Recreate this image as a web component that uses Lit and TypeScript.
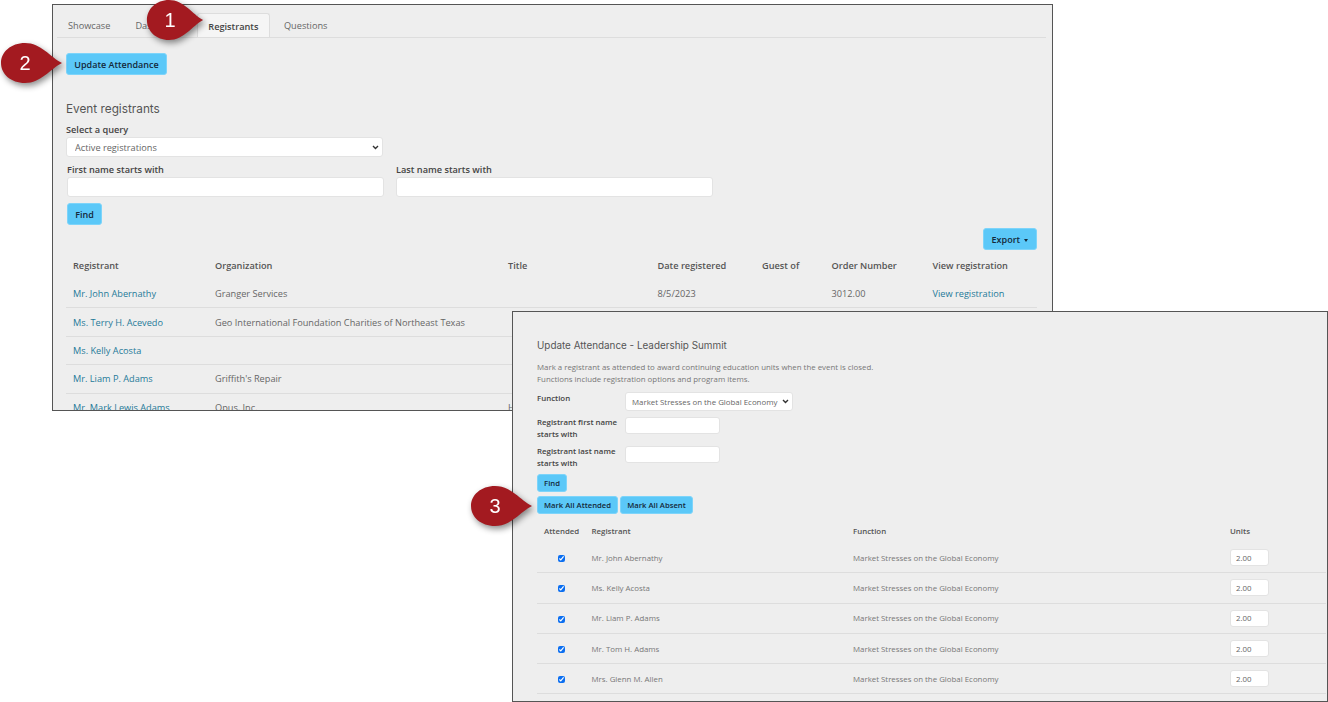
import { LitElement, html, css } from 'lit';
import { customElement } from 'lit/decorators.js';

const registrants = [
  { name: 'Mr. John Abernathy', org: 'Granger Services', title: '', date: '8/5/2023', order: '3012.00', view: 'View registration' },
  { name: 'Ms. Terry H. Acevedo', org: 'Geo International Foundation Charities of Northeast Texas', title: '', date: '', order: '', view: '' },
  { name: 'Ms. Kelly Acosta', org: '', title: '', date: '', order: '', view: '' },
  { name: 'Mr. Liam P. Adams', org: "Griffith's Repair", title: '', date: '', order: '', view: '' },
  { name: 'Mr. Mark Lewis Adams', org: 'Opus, Inc.', title: 'Head', date: '', order: '', view: '' },
];

const attendees = ['Mr. John Abernathy', 'Ms. Kelly Acosta', 'Mr. Liam P. Adams', 'Mr. Tom H. Adams', 'Mrs. Glenn M. Allen'];

@customElement('app-root')
export class AppRoot extends LitElement {
  static styles = css`
    :host {
      display: block;
      position: relative;
      width: 1328px;
      height: 702px;
      overflow: hidden;
      background: #fff;
      font-family: 'Open Sans', sans-serif;
      font-size: 9.2px;
      color: #666;
    }

    .window {
      position: absolute;
      box-sizing: border-box;
      background: #eee;
      border: 1px solid #555;
      overflow: hidden;
    }

    .registrants { left: 52px; top: 4px; width: 1001px; height: 407px; padding: 8px 6px 0 13px; }
    .attendance { left: 512px; top: 311px; width: 816px; height: 391px; padding: 25px 0 0 24px; }

    .tabs {
      display: flex;
      gap: 3px;
      margin-left: -9px;
      height: 24px;
      border-bottom: 1px solid #ddd;
    }
    .tab { padding: 0 11px; line-height: 25px; color: #666; }
    .tab.active {
      color: #444;
      font-weight: 600;
      background: #f5f5f5;
      border: 1px solid #ddd;
      border-bottom: none;
      border-radius: 3px 3px 0 0;
      padding: 0 10.5px;
    }

    button {
      display: block;
      box-sizing: border-box;
      font-family: 'Open Sans', sans-serif;
      font-size: 9px;
      font-weight: 600;
      color: #14293a;
      background: #5bc8f8;
      border: 1px solid #7dd4fa;
      border-radius: 3px;
      padding: 0;
    }
    .update { width: 101px; height: 22px; margin-top: 15px; }
    .find { width: 35px; height: 22px; margin: 6px 0 0 1px; }
    .export { width: 54px; height: 22px; margin: 3px 9px 0 auto; }
    .caret {
      display: inline-block;
      margin-left: 2px;
      vertical-align: middle;
      border-top: 3px solid #14293a;
      border-left: 2.5px solid transparent;
      border-right: 2.5px solid transparent;
    }

    h2 {
      margin: 26px 0 0;
      font-family: Inter, sans-serif;
      font-size: 11.8px;
      line-height: 16px;
      font-weight: 400;
      color: #555;
    }

    label { font-weight: 600; color: #444; line-height: 13px; display: block; }
    .query { margin-top: 6px; }
    .query label { line-height: 14px; }

    select, input[type='text'] {
      display: block;
      box-sizing: border-box;
      font-family: 'Open Sans', sans-serif;
      font-size: 9.2px;
      color: #666;
      background: #fff;
      border: 1px solid #e3e3e3;
      border-radius: 3px;
      margin: 0;
    }
    select {
      appearance: none;
      background-image: url("data:image/svg+xml,%3Csvg xmlns='http://www.w3.org/2000/svg' width='7' height='5'%3E%3Cpath d='M1 1l2.5 2.5L6 1' fill='none' stroke='%23333' stroke-width='1.4'/%3E%3C/svg%3E");
      background-repeat: no-repeat;
      background-position: right 3px center;
    }
    .query select { width: 317px; height: 20px; padding-left: 8px; }

    .names { display: flex; gap: 12px; margin: 6px 0 0 1px; }
    .names input { width: 317px; height: 20px; margin-top: 1px; }

    table { border-collapse: collapse; table-layout: fixed; }
    th { text-align: left; font-weight: 600; color: #555; padding: 0 0 0 7px; }
    td { padding: 0 0 0 7px; white-space: nowrap; overflow: hidden; }
    a { color: #1f7a99; text-decoration: none; }

    .reg-table { width: 971px; margin-top: 1px; }
    .reg-table th { height: 29px; }
    .reg-table td { height: 27.4px; border-bottom: 1px solid #ddd; line-height: 13px; }

    .attendance h3 {
      margin: 0;
      font-family: Inter, sans-serif;
      font-size: 9.9px;
      line-height: 16px;
      font-weight: 400;
      color: #555;
    }
    .attendance p { margin: 8px 0 0; font-size: 7.86px; line-height: 12px; color: #777; }

    .form {
      display: grid;
      grid-template-columns: 88px 95px;
      align-items: start;
      row-gap: 5px;
      margin-top: 7px;
      font-size: 7.86px;
    }
    .form label { line-height: 12px; }
    .form .single { line-height: 13px; }
    .form select, .form input { font-size: 7.86px; }
    .form select { width: 168px; height: 19px; padding-left: 6px; background-position: right 3px center; }
    .form input { width: 95px; height: 17px; margin-top: 1px; }

    .attendance button { font-size: 7.7px; height: 18px; }
    .attendance .a-find { width: 30px; margin-top: 5px; }
    .marks { display: flex; gap: 2px; margin-top: 4px; }
    .marks .all { width: 81px; }
    .marks .absent { width: 73px; }

    .att-table { width: 789px; font-size: 7.86px; }
    .att-table th { height: 25px; padding-top: 4px; }
    .att-table td { height: 29.3px; border-bottom: 1px solid #ddd; color: #777; }
    .att-table .check { padding: 0 0 0 1px; text-align: center; }
    .att-table input[type='checkbox'] {
      width: 7px;
      height: 7px;
      margin: 0;
      accent-color: #0b6ef0;
      display: inline-block;
      vertical-align: middle;
    }
    .att-table input[type='text'] { width: 39px; height: 17px; padding-left: 5px; font-size: 7.86px; }

    .pin {
      position: absolute;
      width: 63px;
      height: 42px;
      filter: drop-shadow(2px 3px 3px rgba(0, 0, 0, 0.45));
    }
    .pin svg { display: block; width: 100%; height: 100%; }
    .pin span {
      position: absolute;
      left: 0;
      top: 0;
      width: 50px;
      line-height: 42px;
      text-align: center;
      font-family: 'Liberation Sans', sans-serif;
      font-size: 20px;
      color: #fff;
    }
    .pin1 { left: 146px; top: -1px; width: 58px; }
    .pin1 span { width: 48px; }
    .pin2 { left: 0; top: 42px; }
    .pin3 { left: 470px; top: 485px; }
  `;

  private pin(n: number) {
    return html`<div class="pin pin${n}">
      <svg viewBox="0 0 63 42" preserveAspectRatio="none">
        <path d="M62 21C50 15 41 1 25 1C11 1 1 10 1 21C1 32 11 41 25 41C41 41 50 27 62 21Z" fill="#a31a20" />
      </svg>
      <span>${n}</span>
    </div>`;
  }

  render() {
    return html`
      <div class="window registrants">
        <div class="tabs">
          <div class="tab">Showcase</div>
          <div class="tab">Dashboard</div>
          <div class="tab active">Registrants</div>
          <div class="tab">Questions</div>
        </div>
        <button class="update">Update Attendance</button>
        <h2>Event registrants</h2>
        <div class="query">
          <label>Select a query</label>
          <select><option>Active registrations</option></select>
        </div>
        <div class="names">
          <div><label>First name starts with</label><input type="text" /></div>
          <div><label>Last name starts with</label><input type="text" /></div>
        </div>
        <button class="find">Find</button>
        <button class="export">Export <span class="caret"></span></button>
        <table class="reg-table">
          <colgroup>
            <col style="width:142px" /><col style="width:293px" /><col style="width:149.5px" />
            <col style="width:104.5px" /><col style="width:69.5px" /><col style="width:101px" /><col />
          </colgroup>
          <tr>
            <th>Registrant</th><th>Organization</th><th>Title</th><th>Date registered</th>
            <th>Guest of</th><th>Order Number</th><th>View registration</th>
          </tr>
          ${registrants.map(
            (r) => html`<tr>
              <td><a href="#">${r.name}</a></td>
              <td>${r.org}</td>
              <td>${r.title}</td>
              <td>${r.date}</td>
              <td></td>
              <td>${r.order}</td>
              <td><a href="#">${r.view}</a></td>
            </tr>`
          )}
        </table>
      </div>

      <div class="window attendance">
        <h3>Update Attendance - Leadership Summit</h3>
        <p>
          Mark a registrant as attended to award continuing education units when the event is closed.<br />
          Functions include registration options and program items.
        </p>
        <div class="form">
          <label class="single">Function</label>
          <select><option>Market Stresses on the Global Economy</option></select>
          <label>Registrant first name starts with</label>
          <input type="text" />
          <label>Registrant last name starts with</label>
          <input type="text" />
        </div>
        <button class="a-find">Find</button>
        <div class="marks">
          <button class="all">Mark All Attended</button>
          <button class="absent">Mark All Absent</button>
        </div>
        <table class="att-table">
          <colgroup>
            <col style="width:47.5px" /><col style="width:261.5px" /><col style="width:377px" /><col />
          </colgroup>
          <tr><th>Attended</th><th>Registrant</th><th>Function</th><th>Units</th></tr>
          ${attendees.map(
            (name) => html`<tr>
              <td class="check"><input type="checkbox" checked /></td>
              <td>${name}</td>
              <td>Market Stresses on the Global Economy</td>
              <td><input type="text" value="2.00" /></td>
            </tr>`
          )}
        </table>
      </div>

      ${this.pin(1)}${this.pin(2)}${this.pin(3)}
    `;
  }
}
